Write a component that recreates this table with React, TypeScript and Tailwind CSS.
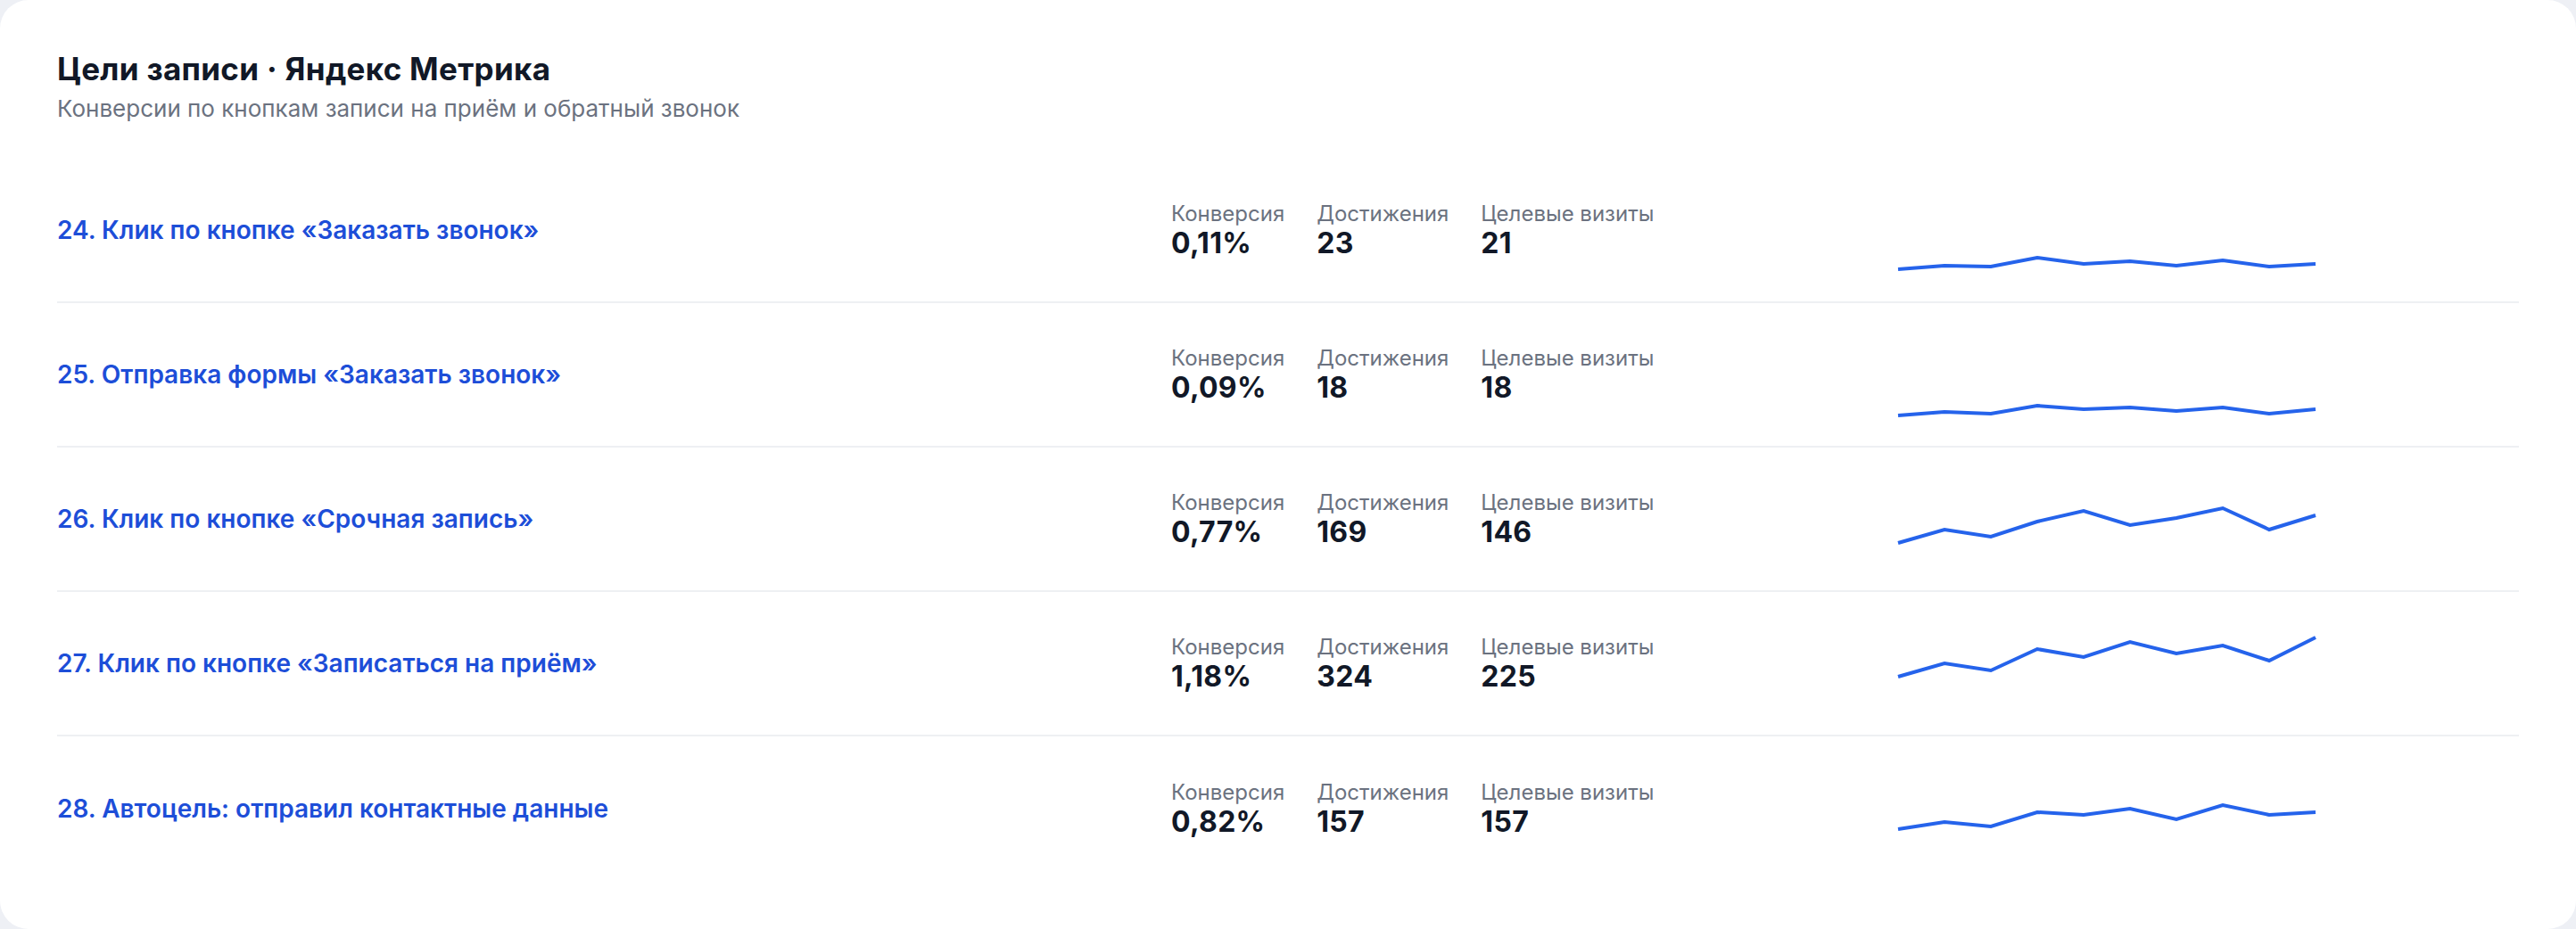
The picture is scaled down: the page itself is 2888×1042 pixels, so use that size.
import React from "react";

type Row = {
  title: string;
  conv: string;
  ach: string;
  vis: string;
  pts: number[];
};

const rows: Row[] = [
  { title: "24. Клик по кнопке «Заказать звонок»", conv: "0,11%", ach: "23", vis: "21", pts: [94, 90, 91, 81, 88, 85, 90, 84, 91, 88] },
  { title: "25. Отправка формы «Заказать звонок»", conv: "0,09%", ach: "18", vis: "18", pts: [96, 92, 94, 85, 89, 87, 91, 87, 94, 89] },
  { title: "26. Клик по кнопке «Срочная запись»", conv: "0,77%", ach: "169", vis: "146", pts: [77, 62, 70, 53, 41, 57, 49, 38, 62, 46] },
  { title: "27. Клик по кнопке «Записаться на приём»", conv: "1,18%", ach: "324", vis: "225", pts: [65, 50, 58, 34, 43, 26, 39, 30, 47, 21] },
  { title: "28. Автоцель: отправил контактные данные", conv: "0,82%", ach: "157", vis: "157", pts: [73, 65, 70, 54, 57, 50, 62, 46, 57, 54] },
];

function Sparkline({ pts }: { pts: number[] }) {
  const d = pts.map((y, i) => `${i === 0 ? "M" : "L"}${i * 52} ${y}`).join(" ");
  return (
    <svg width="468" height="100" viewBox="0 0 468 100" className="overflow-visible">
      <path d={d} fill="none" stroke="#2563eb" strokeWidth="4" strokeLinejoin="miter" />
    </svg>
  );
}

function Stat({ label, value }: { label: string; value: string }) {
  return (
    <div className="flex flex-col">
      <div className="text-[24px] leading-[30px] text-[#6b7280]">{label}</div>
      <div className="text-[32px] leading-[36px] font-bold text-[#111827] tracking-[0.3px]">{value}</div>
    </div>
  );
}

export default function App() {
  return (
    <div className="w-full h-[1042px] bg-[#eef0f5]" style={{ fontFamily: "Inter, 'Noto Sans', sans-serif" }}>
      <div className="w-full h-full bg-white rounded-[32px] pl-16 pr-[64px] pt-[57px]">
        <h1 className="text-[35px] leading-[40px] font-bold tracking-[0.3px] text-[#111827]">Цели записи · Яндекс Метрика</h1>
        <p className="mt-[7px] text-[26px] leading-[36px] text-[#6b7280]">
          Конверсии по кнопкам записи на приём и обратный звонок
        </p>
        <div className="mt-[38px] flex flex-col">
          {rows.map((r, i) => (
            <div
              key={i}
              className={`h-[162px] grid grid-cols-[1249px_815px_468px_1fr] items-center ${i < rows.length - 1 ? "border-b-2 border-[#eef0f3]" : ""}`}
            >
              <div className="text-[28px] leading-[36px] font-semibold text-[#1d4ed8]">{r.title}</div>
              <div className="flex gap-[36px]">
                <Stat label="Конверсия" value={r.conv} />
                <Stat label="Достижения" value={r.ach} />
                <Stat label="Целевые визиты" value={r.vis} />
              </div>
              <div className="flex items-center">
                <Sparkline pts={r.pts} />
              </div>
              <div />
            </div>
          ))}
        </div>
      </div>
    </div>
  );
}
